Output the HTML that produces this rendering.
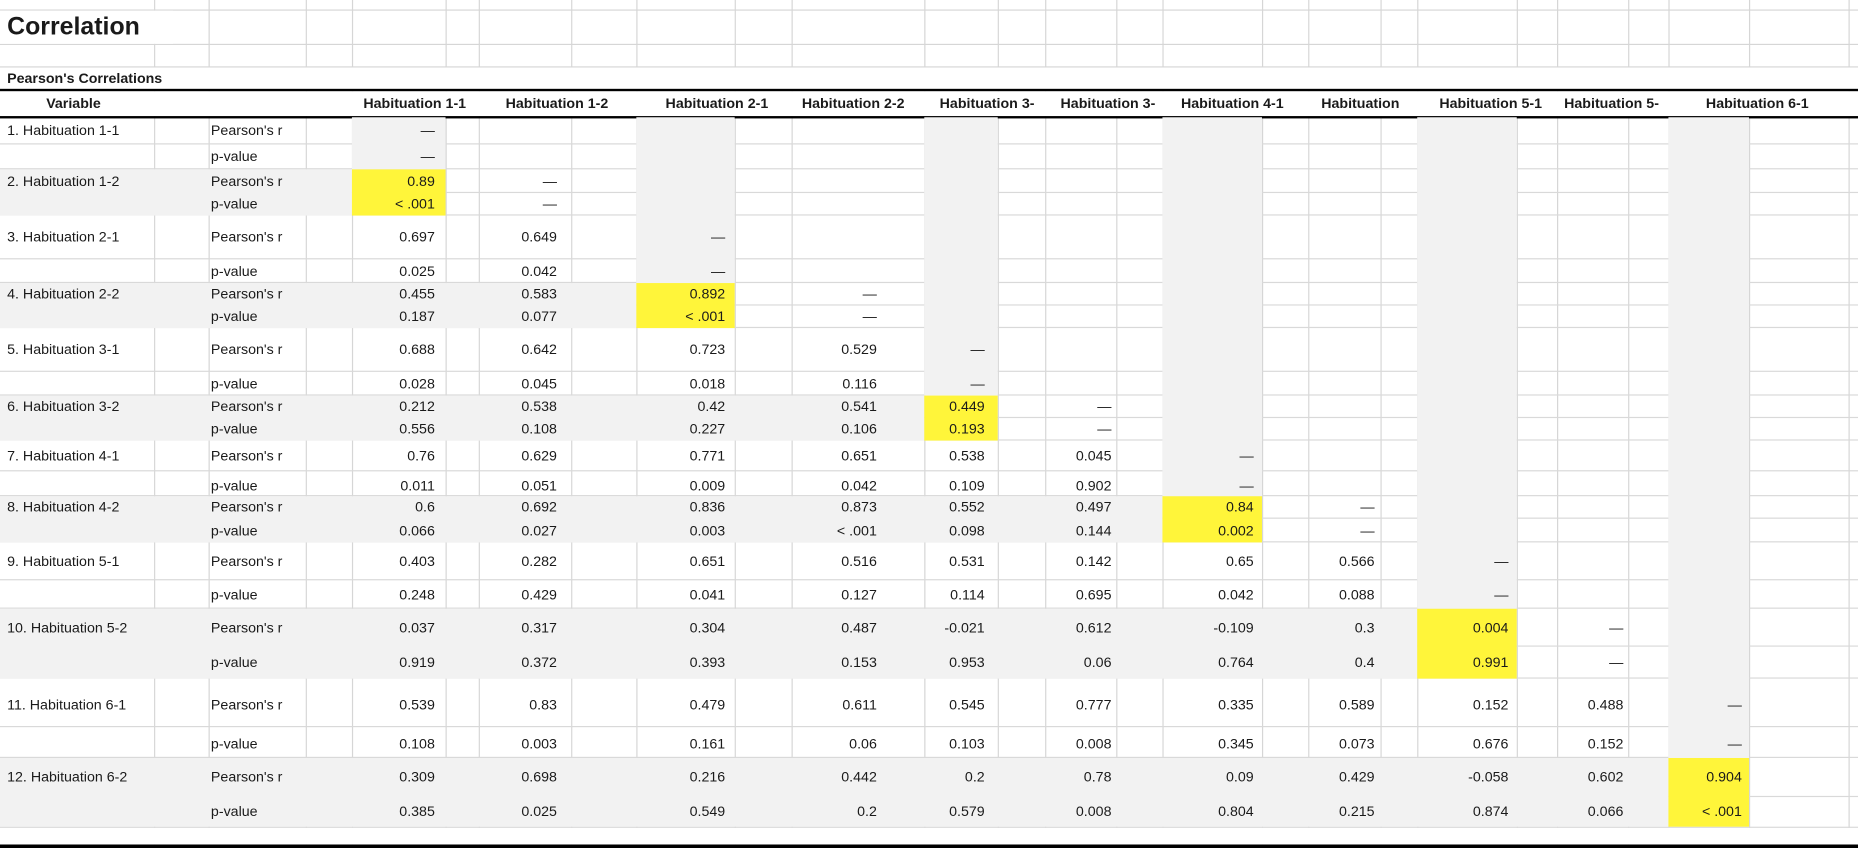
<!DOCTYPE html>
<html><head><meta charset="utf-8">
<style>
html,body{margin:0;padding:0;background:#fff;overflow:hidden}
#w{position:relative;width:1568px;height:716px;transform-origin:0 0;transform:scale(1.18495,1.18436);font-family:"Liberation Sans",Arial,sans-serif;color:#1a1a1a;font-size:12px}
.v{position:absolute;top:0;width:1px;background:#d6d6d6}
.h{position:absolute;left:0;width:1568px;height:1px;background:#d6d6d6}
.g{position:absolute;background:#f2f2f2}
.y{position:absolute;background:#fff53a}
.r{position:absolute;left:0;width:1568px;border-bottom:1px solid #d9d9d9;box-sizing:border-box}
.t{position:absolute;left:0;width:1568px;white-space:nowrap}
.t b{position:absolute;left:6px;font-weight:normal}
.t u{position:absolute;left:178px;text-decoration:none}
.t i{position:absolute;font-style:normal;text-align:right}
.c1{right:1201px}.c2{right:1098px}.c3{right:956px}.c4{right:828px}.c5{right:737px}.c6{right:630px}.c7{right:510px}.c8{right:408px}.c9{right:295px}.c10{right:198px}.c11{right:98px}
.hd{position:absolute;top:77px;height:21px;line-height:21px;font-weight:bold;font-size:12px;white-space:nowrap;transform:translateX(-50%)}
.thick{position:absolute;left:0;width:1568px;height:2px;background:#000}
</style></head><body><div id="w">
<div class="v" style="left:130px;height:716px"></div>
<div class="v" style="left:176px;height:716px"></div>
<div class="v" style="left:258px;height:716px"></div>
<div class="v" style="left:297px;height:716px"></div>
<div class="v" style="left:376px;height:716px"></div>
<div class="v" style="left:404px;height:716px"></div>
<div class="v" style="left:482px;height:716px"></div>
<div class="v" style="left:537px;height:716px"></div>
<div class="v" style="left:620px;height:716px"></div>
<div class="v" style="left:668px;height:716px"></div>
<div class="v" style="left:780px;height:716px"></div>
<div class="v" style="left:842px;height:716px"></div>
<div class="v" style="left:882px;height:716px"></div>
<div class="v" style="left:942px;height:716px"></div>
<div class="v" style="left:981px;height:716px"></div>
<div class="v" style="left:1065px;height:716px"></div>
<div class="v" style="left:1104px;height:716px"></div>
<div class="v" style="left:1165px;height:716px"></div>
<div class="v" style="left:1196px;height:716px"></div>
<div class="v" style="left:1280px;height:716px"></div>
<div class="v" style="left:1314px;height:716px"></div>
<div class="v" style="left:1374px;height:716px"></div>
<div class="v" style="left:1408px;height:716px"></div>
<div class="v" style="left:1476px;height:716px"></div>
<div class="v" style="left:1560px;height:716px"></div>
<div class="h" style="top:8px"></div>
<div class="h" style="top:37px"></div>
<div class="h" style="top:56px"></div>
<div style="position:absolute;left:0;top:57px;width:1568px;height:19px;background:#fff"></div>
<div style="position:absolute;left:0;top:9px;width:146px;height:28px;background:#fff"></div>
<div style="position:absolute;left:6px;top:8px;height:29px;line-height:29px;font-size:21px;font-weight:bold">Correlation</div>
<div style="position:absolute;left:6px;top:58px;line-height:17px;font-size:12px;font-weight:bold">Pearson's Correlations</div>
<div style="position:absolute;left:0;top:77px;width:1568px;height:21px;background:#fff"></div>
<div class="thick" style="top:75px"></div>
<div class="thick" style="top:98px"></div>
<div class="thick" style="top:713px;height:3px"></div>
<div style="position:absolute;left:0;top:699px;width:1568px;height:14px;background:#fff"></div>
<div class="hd" style="left:62px">Variable</div>
<div class="hd" style="left:350px">Habituation 1-1</div>
<div class="hd" style="left:470px">Habituation 1-2</div>
<div class="hd" style="left:605px">Habituation 2-1</div>
<div class="hd" style="left:720px">Habituation 2-2</div>
<div class="hd" style="left:833px">Habituation 3-</div>
<div class="hd" style="left:935px">Habituation 3-</div>
<div class="hd" style="left:1040px">Habituation 4-1</div>
<div class="hd" style="left:1148px">Habituation</div>
<div class="hd" style="left:1258px">Habituation 5-1</div>
<div class="hd" style="left:1360px">Habituation 5-</div>
<div class="hd" style="left:1483px">Habituation 6-1</div>
<div class="r" style="top:99px;height:23px"></div>
<div class="r" style="top:122px;height:21px"></div>
<div class="r" style="top:143px;height:20px"></div>
<div class="r" style="top:163px;height:19px"></div>
<div class="r" style="top:182px;height:37px"></div>
<div class="r" style="top:219px;height:20px"></div>
<div class="r" style="top:239px;height:19px"></div>
<div class="r" style="top:258px;height:19px"></div>
<div class="r" style="top:277px;height:37px"></div>
<div class="r" style="top:314px;height:20px"></div>
<div class="r" style="top:334px;height:19px"></div>
<div class="r" style="top:353px;height:19px"></div>
<div class="r" style="top:372px;height:26px"></div>
<div class="r" style="top:398px;height:21px"></div>
<div class="r" style="top:419px;height:19px"></div>
<div class="r" style="top:438px;height:20px"></div>
<div class="r" style="top:458px;height:32px"></div>
<div class="r" style="top:490px;height:24px"></div>
<div class="r" style="top:514px;height:32px"></div>
<div class="r" style="top:546px;height:27px"></div>
<div class="r" style="top:573px;height:41px"></div>
<div class="r" style="top:614px;height:26px"></div>
<div class="r" style="top:640px;height:33px"></div>
<div class="r" style="top:673px;height:26px"></div>
<div class="g" style="left:0;top:143px;width:297px;height:39px"></div>
<div class="g" style="left:0;top:239px;width:537px;height:38px"></div>
<div class="g" style="left:0;top:334px;width:780px;height:38px"></div>
<div class="g" style="left:0;top:419px;width:981px;height:39px"></div>
<div class="g" style="left:0;top:514px;width:1196px;height:59px"></div>
<div class="g" style="left:0;top:640px;width:1408px;height:58px"></div>
<div class="g" style="left:297px;top:99px;width:79px;height:44px"></div>
<div class="g" style="left:537px;top:99px;width:83px;height:140px"></div>
<div class="g" style="left:780px;top:99px;width:62px;height:235px"></div>
<div class="g" style="left:981px;top:99px;width:84px;height:320px"></div>
<div class="g" style="left:1196px;top:99px;width:84px;height:415px"></div>
<div class="g" style="left:1408px;top:99px;width:68px;height:541px"></div>
<div class="y" style="left:297px;top:143px;width:79px;height:39px"></div>
<div class="y" style="left:537px;top:239px;width:83px;height:38px"></div>
<div class="y" style="left:780px;top:334px;width:62px;height:38px"></div>
<div class="y" style="left:981px;top:419px;width:84px;height:39px"></div>
<div class="y" style="left:1196px;top:514px;width:84px;height:59px"></div>
<div class="y" style="left:1408px;top:640px;width:68px;height:58px"></div>
<div class="t" style="top:99px;line-height:23px"><b>1. Habituation 1-1</b><u>Pearson's r</u><i class="c1">—</i></div>
<div class="t" style="top:122px;line-height:21px"><u>p-value</u><i class="c1">—</i></div>
<div class="t" style="top:143px;line-height:20px"><b>2. Habituation 1-2</b><u>Pearson's r</u><i class="c1">0.89</i><i class="c2">—</i></div>
<div class="t" style="top:163px;line-height:19px"><u>p-value</u><i class="c1">&lt; .001</i><i class="c2">—</i></div>
<div class="t" style="top:182px;line-height:37px"><b>3. Habituation 2-1</b><u>Pearson's r</u><i class="c1">0.697</i><i class="c2">0.649</i><i class="c3">—</i></div>
<div class="t" style="top:219px;line-height:20px"><u>p-value</u><i class="c1">0.025</i><i class="c2">0.042</i><i class="c3">—</i></div>
<div class="t" style="top:239px;line-height:19px"><b>4. Habituation 2-2</b><u>Pearson's r</u><i class="c1">0.455</i><i class="c2">0.583</i><i class="c3">0.892</i><i class="c4">—</i></div>
<div class="t" style="top:258px;line-height:19px"><u>p-value</u><i class="c1">0.187</i><i class="c2">0.077</i><i class="c3">&lt; .001</i><i class="c4">—</i></div>
<div class="t" style="top:277px;line-height:37px"><b>5. Habituation 3-1</b><u>Pearson's r</u><i class="c1">0.688</i><i class="c2">0.642</i><i class="c3">0.723</i><i class="c4">0.529</i><i class="c5">—</i></div>
<div class="t" style="top:314px;line-height:20px"><u>p-value</u><i class="c1">0.028</i><i class="c2">0.045</i><i class="c3">0.018</i><i class="c4">0.116</i><i class="c5">—</i></div>
<div class="t" style="top:334px;line-height:19px"><b>6. Habituation 3-2</b><u>Pearson's r</u><i class="c1">0.212</i><i class="c2">0.538</i><i class="c3">0.42</i><i class="c4">0.541</i><i class="c5">0.449</i><i class="c6">—</i></div>
<div class="t" style="top:353px;line-height:19px"><u>p-value</u><i class="c1">0.556</i><i class="c2">0.108</i><i class="c3">0.227</i><i class="c4">0.106</i><i class="c5">0.193</i><i class="c6">—</i></div>
<div class="t" style="top:372px;line-height:26px"><b>7. Habituation 4-1</b><u>Pearson's r</u><i class="c1">0.76</i><i class="c2">0.629</i><i class="c3">0.771</i><i class="c4">0.651</i><i class="c5">0.538</i><i class="c6">0.045</i><i class="c7">—</i></div>
<div class="t" style="top:398px;line-height:24px"><u>p-value</u><i class="c1">0.011</i><i class="c2">0.051</i><i class="c3">0.009</i><i class="c4">0.042</i><i class="c5">0.109</i><i class="c6">0.902</i><i class="c7">—</i></div>
<div class="t" style="top:419px;line-height:19px"><b>8. Habituation 4-2</b><u>Pearson's r</u><i class="c1">0.6</i><i class="c2">0.692</i><i class="c3">0.836</i><i class="c4">0.873</i><i class="c5">0.552</i><i class="c6">0.497</i><i class="c7">0.84</i><i class="c8">—</i></div>
<div class="t" style="top:438px;line-height:20px"><u>p-value</u><i class="c1">0.066</i><i class="c2">0.027</i><i class="c3">0.003</i><i class="c4">&lt; .001</i><i class="c5">0.098</i><i class="c6">0.144</i><i class="c7">0.002</i><i class="c8">—</i></div>
<div class="t" style="top:458px;line-height:32px"><b>9. Habituation 5-1</b><u>Pearson's r</u><i class="c1">0.403</i><i class="c2">0.282</i><i class="c3">0.651</i><i class="c4">0.516</i><i class="c5">0.531</i><i class="c6">0.142</i><i class="c7">0.65</i><i class="c8">0.566</i><i class="c9">—</i></div>
<div class="t" style="top:490px;line-height:24px"><u>p-value</u><i class="c1">0.248</i><i class="c2">0.429</i><i class="c3">0.041</i><i class="c4">0.127</i><i class="c5">0.114</i><i class="c6">0.695</i><i class="c7">0.042</i><i class="c8">0.088</i><i class="c9">—</i></div>
<div class="t" style="top:514px;line-height:32px"><b>10. Habituation 5-2</b><u>Pearson's r</u><i class="c1">0.037</i><i class="c2">0.317</i><i class="c3">0.304</i><i class="c4">0.487</i><i class="c5">-0.021</i><i class="c6">0.612</i><i class="c7">-0.109</i><i class="c8">0.3</i><i class="c9">0.004</i><i class="c10">—</i></div>
<div class="t" style="top:546px;line-height:27px"><u>p-value</u><i class="c1">0.919</i><i class="c2">0.372</i><i class="c3">0.393</i><i class="c4">0.153</i><i class="c5">0.953</i><i class="c6">0.06</i><i class="c7">0.764</i><i class="c8">0.4</i><i class="c9">0.991</i><i class="c10">—</i></div>
<div class="t" style="top:573px;line-height:44px"><b>11. Habituation 6-1</b><u>Pearson's r</u><i class="c1">0.539</i><i class="c2">0.83</i><i class="c3">0.479</i><i class="c4">0.611</i><i class="c5">0.545</i><i class="c6">0.777</i><i class="c7">0.335</i><i class="c8">0.589</i><i class="c9">0.152</i><i class="c10">0.488</i><i class="c11">—</i></div>
<div class="t" style="top:614px;line-height:28px"><u>p-value</u><i class="c1">0.108</i><i class="c2">0.003</i><i class="c3">0.161</i><i class="c4">0.06</i><i class="c5">0.103</i><i class="c6">0.008</i><i class="c7">0.345</i><i class="c8">0.073</i><i class="c9">0.676</i><i class="c10">0.152</i><i class="c11">—</i></div>
<div class="t" style="top:640px;line-height:33px"><b>12. Habituation 6-2</b><u>Pearson's r</u><i class="c1">0.309</i><i class="c2">0.698</i><i class="c3">0.216</i><i class="c4">0.442</i><i class="c5">0.2</i><i class="c6">0.78</i><i class="c7">0.09</i><i class="c8">0.429</i><i class="c9">-0.058</i><i class="c10">0.602</i><i class="c11">0.904</i></div>
<div class="t" style="top:673px;line-height:25px"><u>p-value</u><i class="c1">0.385</i><i class="c2">0.025</i><i class="c3">0.549</i><i class="c4">0.2</i><i class="c5">0.579</i><i class="c6">0.008</i><i class="c7">0.804</i><i class="c8">0.215</i><i class="c9">0.874</i><i class="c10">0.066</i><i class="c11">&lt; .001</i></div>
</div></body></html>
